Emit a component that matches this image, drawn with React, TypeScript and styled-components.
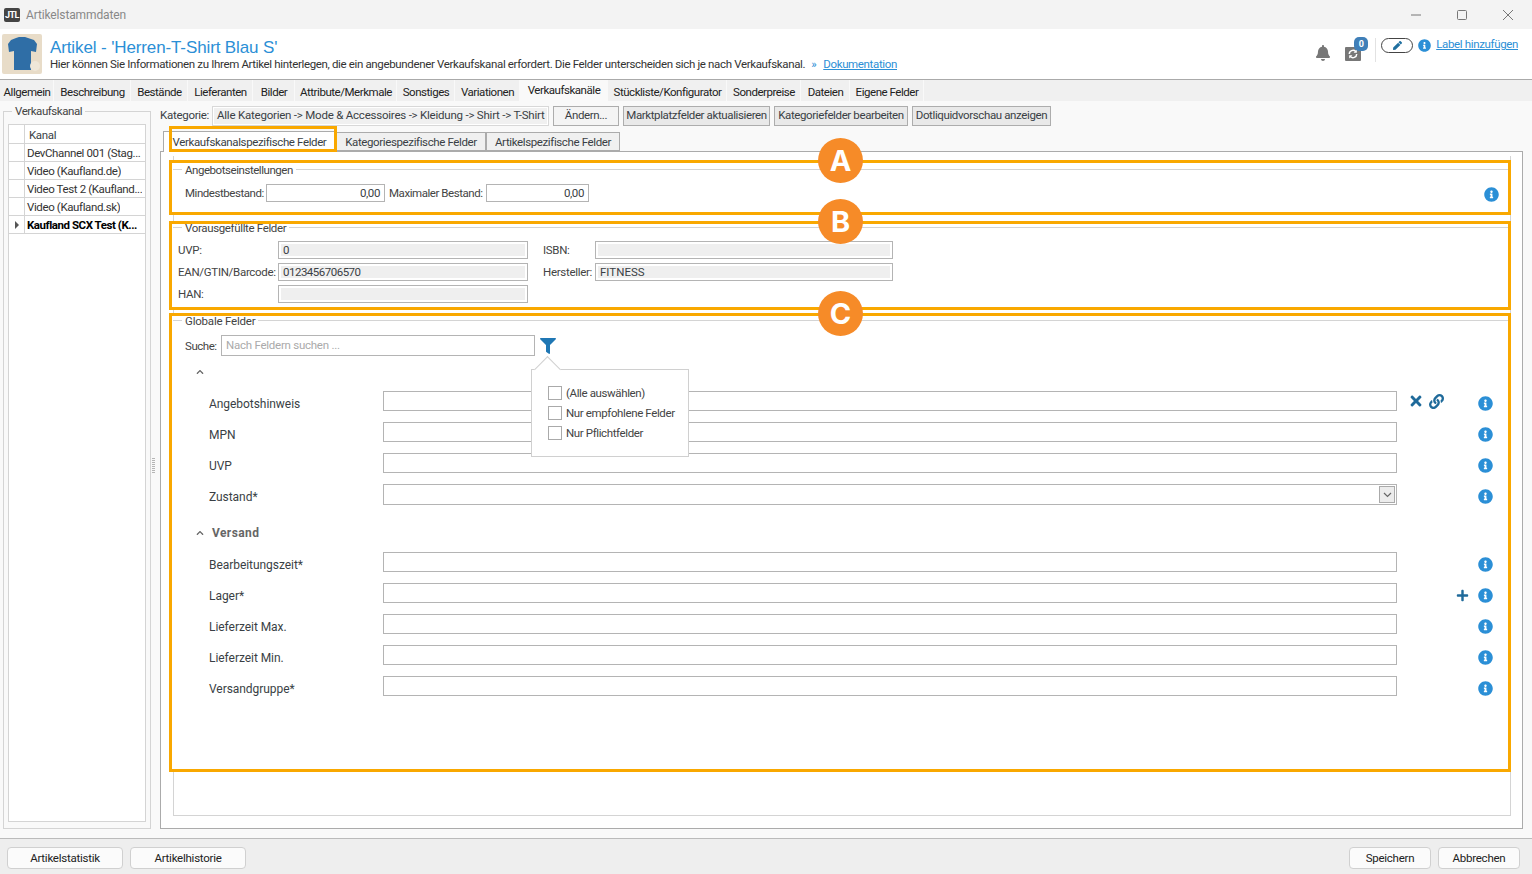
import React from 'react'
import styled, { createGlobalStyle } from 'styled-components'
import { FaBell, FaChevronUp, FaFilter, FaInfoCircle, FaLink, FaPen, FaPlus, FaTimes } from 'react-icons/fa'

const GlobalStyle = createGlobalStyle`
  html, body {
    margin: 0;
    padding: 0;
    background: #f9f9f9;
  }

  * {
    box-sizing: border-box;
  }
`

const mainTabs = [
  { label: 'Allgemein', width: 54 },
  { label: 'Beschreibung', width: 77 },
  { label: 'Bestände', width: 57 },
  { label: 'Lieferanten', width: 65 },
  { label: 'Bilder', width: 42 },
  { label: 'Attribute/Merkmale', width: 102 },
  { label: 'Sonstiges', width: 58 },
  { label: 'Variationen', width: 65 },
  { label: 'Verkaufskanäle', width: 88, active: true },
  { label: 'Stückliste/Konfigurator', width: 119 },
  { label: 'Sonderpreise', width: 74 },
  { label: 'Dateien', width: 49 },
  { label: 'Eigene Felder', width: 74 },
]

const channels = [
  'DevChannel 001 (Stag...',
  'Video (Kaufland.de)',
  'Video Test 2 (Kaufland...',
  'Video (Kaufland.sk)',
]

const groupOne = ['Angebotshinweis', 'MPN', 'UVP']
const groupTwo = ['Bearbeitungszeit*', 'Lager*', 'Lieferzeit Max.', 'Lieferzeit Min.', 'Versandgruppe*']

const Shirt = () => (
  <svg width="40" height="40" viewBox="0 0 40 40">
    <rect width="40" height="40" rx="2" fill="#e8dcc8" />
    <path d="M14 4l3-1h6l3 1 6 2 3 4-1 8-5-1v19H12V17l-5 1-1-8 3-4z" fill="#2f6ea6" />
    <circle cx="33" cy="32" r="5" fill="#efe7d8" />
  </svg>
)

const Sync = () => (
  <svg width="16" height="14" viewBox="0 0 16 14">
    <rect width="16" height="14" rx="1" fill="#777" />
    <path d="M4.300 7a3.700 3.700 0 0 1 6.400-2.500M11.700 7a3.700 3.700 0 0 1-6.400 2.500" fill="none" stroke="#fff" strokeWidth="1.500" />
    <path d="M11.800 2.500v3.200H8.600zM4.200 11.500V8.300h3.200z" fill="#fff" />
  </svg>
)

const App = () => (
  <Page>
    <GlobalStyle />
    <TitleBar>
      <AppLogo>JTL</AppLogo>
      <WindowTitle>Artikelstammdaten</WindowTitle>
      <WindowButtons>
        <svg width="12" height="12" viewBox="0 0 12 12"><path d="M1 6h10" stroke="#777" /></svg>
        <svg width="12" height="12" viewBox="0 0 12 12"><rect x="1.500" y="1.500" width="9" height="9" rx="1" fill="none" stroke="#777" /></svg>
        <svg width="12" height="12" viewBox="0 0 12 12"><path d="M1 1l10 10M11 1L1 11" stroke="#777" /></svg>
      </WindowButtons>
    </TitleBar>

    <Header>
      <Shirt />
      <HeaderText>
        <ArticleTitle>Artikel - 'Herren-T-Shirt Blau S'</ArticleTitle>
        <HeaderHint>
          Hier können Sie Informationen zu Ihrem Artikel hinterlegen, die ein angebundener Verkaufskanal erfordert. Die Felder unterscheiden sich je nach Verkaufskanal.
          <Raquo>»</Raquo>
          <HeaderLink>Dokumentation</HeaderLink>
        </HeaderHint>
      </HeaderText>
      <HeaderTools>
        <BellSlot>
          <FaBell size={16} color="#777" />
        </BellSlot>
        <SyncSlot>
          <Sync />
          <SyncBadge>0</SyncBadge>
        </SyncSlot>
        <ToolDivider />
        <PencilPill>
          <FaPen size={9} color="#1f6f9f" />
        </PencilPill>
        <LabelInfo>
          <FaInfoCircle size={13} color="#2b8fd6" />
        </LabelInfo>
        <HeaderLink>Label hinzufügen</HeaderLink>
      </HeaderTools>
    </Header>

    <MainTabs>
      {mainTabs.map((tab) => (
        <MainTab key={tab.label} $width={tab.width} $active={tab.active}>
          {tab.label}
        </MainTab>
      ))}
    </MainTabs>

    <Body>
      <Sidebar>
        <SideLegend $left={8} $top={-8} $spacing={-0.45}>Verkaufskanal</SideLegend>
        <ChannelGrid>
          <ChannelHeadRow>
            <ChannelMarker />
            <ChannelHead>Kanal</ChannelHead>
          </ChannelHeadRow>
          {channels.map((channel) => (
            <ChannelRow key={channel}>
              <ChannelMarker />
              <ChannelCell>{channel}</ChannelCell>
            </ChannelRow>
          ))}
          <ChannelRow>
            <ChannelMarker>
              <RowArrow />
            </ChannelMarker>
            <ChannelCell $bold>Kaufland SCX Test (K...</ChannelCell>
          </ChannelRow>
        </ChannelGrid>
      </Sidebar>

      <Splitter>
        <SplitterGrip />
      </Splitter>

      <Content>
        <CategoryBar>
          <CategoryLabel>Kategorie:</CategoryLabel>
          <CategoryPath>Alle Kategorien -&gt; Mode &amp; Accessoires -&gt; Kleidung -&gt; Shirt -&gt; T-Shirt</CategoryPath>
          <ToolButton $width={66} $light>Ändern...</ToolButton>
          <ToolButton $width={147}>Marktplatzfelder aktualisieren</ToolButton>
          <ToolButton $width={134}>Kategoriefelder bearbeiten</ToolButton>
          <ToolButton $width={139}>Dotliquidvorschau anzeigen</ToolButton>
        </CategoryBar>

        <SubTabs>
          <SubTab $width={173} $active>
            <TabHighlight />
            Verkaufskanalspezifische Felder
          </SubTab>
          <SubTab $width={150}>Kategoriespezifische Felder</SubTab>
          <SubTab $width={134}>Artikelspezifische Felder</SubTab>
        </SubTabs>

        <TabPanel>
          <InnerPanel>
            <Highlight $height={55} $gap={0}>
              <GroupLegend $left={13} $top={3} $spacing={-0.45}>Angebotseinstellungen</GroupLegend>
              <GroupLine $offset={9} />
              <OfferRow>
                <FieldLabel $width={78}>Mindestbestand:</FieldLabel>
                <NumberField $width={119}>0,00</NumberField>
                <FieldLabel $width={94}>Maximaler Bestand:</FieldLabel>
                <NumberField $width={103}>0,00</NumberField>
                <OfferInfo>
                  <FaInfoCircle size={15} color="#2b8fd6" />
                </OfferInfo>
              </OfferRow>
              <MarkerBadge>A</MarkerBadge>
            </Highlight>

            <Highlight $height={89} $gap={6}>
              <GroupLegend $left={13} $top={0} $spacing={-0.35}>Vorausgefüllte Felder</GroupLegend>
              <GroupLine $offset={6} />
              <PrefillGrid>
                <PrefillLabel>UVP:</PrefillLabel>
                <ReadonlyField>0</ReadonlyField>
                <PrefillLabel>ISBN:</PrefillLabel>
                <ReadonlyField />
                <PrefillLabel>EAN/GTIN/Barcode:</PrefillLabel>
                <ReadonlyField $digits>0123456706570</ReadonlyField>
                <PrefillLabel>Hersteller:</PrefillLabel>
                <ReadonlyField>FITNESS</ReadonlyField>
                <PrefillLabel>HAN:</PrefillLabel>
                <ReadonlyField />
              </PrefillGrid>
              <MarkerBadge>B</MarkerBadge>
            </Highlight>

            <Highlight $height={459} $gap={3}>
              <GroupLegend $left={13} $top={1} $spacing={-0.2}>Globale Felder</GroupLegend>
              <GroupLine $offset={7} />
              <SearchRow>
                <FieldLabel $width={33}>Suche:</FieldLabel>
                <SearchInput>Nach Feldern suchen ...</SearchInput>
                <FaFilter size={16} color="#1f77b4" />
              </SearchRow>
              <SectionHead $top={4}>
                <FaChevronUp size={8} color="#666" />
              </SectionHead>
              {groupOne.map((label, i) => (
                <FieldRow key={label}>
                  <RowLabel>{label}</RowLabel>
                  <RowInput />
                  <RowActions>
                    {i === 0 && (
                      <>
                        <FaTimes size={16} color="#1f6a9a" />
                        <FaLink size={15} color="#1f6a9a" />
                      </>
                    )}
                  </RowActions>
                  <FaInfoCircle size={15} color="#2b8fd6" />
                </FieldRow>
              ))}
              <FieldRow>
                <RowLabel>Zustand*</RowLabel>
                <RowInput $select>
                  <SelectArrow>
                    <svg width="9" height="6" viewBox="0 0 9 6" fill="none" stroke="#666" strokeWidth="1.200">
                      <path d="M1 1l3.500 3.500L8 1" />
                    </svg>
                  </SelectArrow>
                </RowInput>
                <RowActions />
                <FaInfoCircle size={15} color="#2b8fd6" />
              </FieldRow>
              <SectionHead $top={6}>
                <FaChevronUp size={8} color="#666" />
                <SectionTitle>Versand</SectionTitle>
              </SectionHead>
              {groupTwo.map((label, i) => (
                <FieldRow key={label}>
                  <RowLabel>{label}</RowLabel>
                  <RowInput />
                  <RowActions $end>{i === 1 && <FaPlus size={13} color="#1f6a9a" />}</RowActions>
                  <FaInfoCircle size={15} color="#2b8fd6" />
                </FieldRow>
              ))}
              <FilterPopup>
                <FilterOption>
                  <FilterBox />
                  (Alle auswählen)
                </FilterOption>
                <FilterOption>
                  <FilterBox />
                  Nur empfohlene Felder
                </FilterOption>
                <FilterOption>
                  <FilterBox />
                  Nur Pflichtfelder
                </FilterOption>
              </FilterPopup>
              <MarkerBadge>C</MarkerBadge>
            </Highlight>
          </InnerPanel>
        </TabPanel>
      </Content>
    </Body>

    <Footer>
      <FooterGroup>
        <FooterButton $width={116}>Artikelstatistik</FooterButton>
        <FooterButton $width={116}>Artikelhistorie</FooterButton>
      </FooterGroup>
      <FooterGroup>
        <FooterButton $width={82}>Speichern</FooterButton>
        <FooterButton $width={82}>Abbrechen</FooterButton>
      </FooterGroup>
    </Footer>
  </Page>
)

export default App

const Page = styled.div`
  width: 1532px;
  height: 874px;
  overflow: hidden;
  display: flex;
  flex-direction: column;
  font-family: Roboto, 'Liberation Sans', sans-serif;
  font-size: 11.5px;
  letter-spacing: -0.35px;
  color: #3a3f45;
  background: #f9f9f9;
`

const TitleBar = styled.div`
  height: 29px;
  flex: none;
  display: flex;
  align-items: center;
  padding-left: 4px;
  background: #f3f3f3;
`

const AppLogo = styled.div`
  width: 16px;
  height: 14px;
  border-radius: 2px;
  background: #444;
  color: #fff;
  font-size: 9px;
  font-weight: 700;
  line-height: 14px;
  text-align: center;
  letter-spacing: -0.5px;
`

const WindowTitle = styled.div`
  margin-left: 6px;
  color: #888;
  font-size: 12px;
  letter-spacing: -0.13px;
`

const WindowButtons = styled.div`
  margin-left: auto;
  display: flex;
  gap: 34px;
  padding-right: 18px;
`

const Header = styled.div`
  height: 51px;
  flex: none;
  display: flex;
  align-items: flex-start;
  padding: 5px 14px 0 2px;
  background: #fff;
  border-bottom: 1px solid #aaa;
`

const HeaderText = styled.div`
  margin-left: 8px;
`

const ArticleTitle = styled.div`
  color: #2b8fd6;
  font-family: 'Liberation Sans', sans-serif;
  font-size: 17px;
  letter-spacing: -0.12px;
  line-height: 20px;
  margin-top: 4px;
`

const HeaderHint = styled.div`
  color: #333;
  line-height: 15px;
  margin-top: -1px;
`

const Raquo = styled.span`
  margin: 0 7px 0 6px;
  color: #2b8fd6;
`

const HeaderLink = styled.a`
  color: #2b8fd6;
  text-decoration: underline;
  letter-spacing: -0.35px;
`

const HeaderTools = styled.div`
  margin-left: auto;
  margin-top: 4px;
  display: flex;
  align-items: flex-start;
  line-height: 13px;
`

const BellSlot = styled.div`
  display: flex;
  margin-top: 7px;
`

const SyncSlot = styled.div`
  position: relative;
  display: flex;
  margin: 9px 14px 0 14px;
`

const SyncBadge = styled.span`
  position: absolute;
  top: -10px;
  right: -7px;
  width: 14px;
  height: 14px;
  border-radius: 5px;
  background: #3f7fb8;
  color: #fff;
  font-size: 9px;
  font-weight: 700;
  line-height: 14px;
  text-align: center;
`

const ToolDivider = styled.div`
  width: 1px;
  height: 24px;
  background: #e2e2e2;
  margin-right: 5px;
`

const PencilPill = styled.div`
  width: 32px;
  height: 15px;
  border: 1px solid #444;
  border-radius: 8px;
  display: flex;
  align-items: center;
  justify-content: center;
`

const LabelInfo = styled.div`
  display: flex;
  margin: 1px 5px 0 5px;
`

const MainTabs = styled.div`
  height: 21px;
  flex: none;
  display: flex;
  background: #f0f0f0;
`

const MainTab = styled.div<{ $width: number; $active?: boolean }>`
  width: ${(p) => p.$width}px;
  flex: none;
  display: flex;
  align-items: center;
  justify-content: center;
  white-space: nowrap;
  color: #222;
  letter-spacing: -0.46px;
  border-right: 1px solid #f9f9f9;
  background: ${(p) => (p.$active ? '#f9f9f9' : 'transparent')};
  padding-left: 1px;
  padding-top: ${(p) => (p.$active ? '0' : '2px')};
  padding-bottom: ${(p) => (p.$active ? '2px' : '0')};
`

const Body = styled.div`
  flex: 1;
  display: flex;
  min-height: 0;
  padding: 0 9px 9px 3px;
`

const Sidebar = styled.div`
  position: relative;
  width: 148px;
  flex: none;
  margin-top: 10px;
  padding: 12px 4px 6px 4px;
  border: 1px solid #d4d4d4;
`

const GroupLegend = styled.div<{ $left: number; $top: number; $spacing: number }>`
  position: absolute;
  top: ${(p) => p.$top}px;
  left: ${(p) => p.$left}px;
  padding: 0 3px;
  background: #fff;
  line-height: 14px;
  color: #444;
  letter-spacing: ${(p) => p.$spacing}px;
`

const SideLegend = styled(GroupLegend)`
  background: #f9f9f9;
`

const ChannelGrid = styled.div`
  height: 100%;
  background: #fff;
  border: 1px solid #d4d4d4;
`

const ChannelRow = styled.div`
  height: 18px;
  display: flex;
  border-bottom: 1px solid #d4d4d4;
`

const ChannelHeadRow = styled(ChannelRow)`
  height: 19px;
`

const ChannelMarker = styled.div`
  width: 16px;
  flex: none;
  display: flex;
  align-items: center;
  justify-content: center;
  border-right: 1px solid #d4d4d4;
`

const RowArrow = styled.span`
  width: 0;
  height: 0;
  border-top: 4px solid transparent;
  border-bottom: 4px solid transparent;
  border-left: 4px solid #555;
`

const ChannelHead = styled.div`
  padding-left: 4px;
  line-height: 20px;
`

const ChannelCell = styled.div<{ $bold?: boolean }>`
  padding-left: 2px;
  line-height: 18px;
  white-space: nowrap;
  overflow: hidden;
  letter-spacing: ${(p) => (p.$bold ? '-0.45px' : '-0.38px')};
  font-weight: ${(p) => (p.$bold ? 700 : 400)};
  color: ${(p) => (p.$bold ? '#000' : '#333')};
`

const Splitter = styled.div`
  width: 9px;
  flex: none;
  padding-left: 1px;
  display: flex;
  align-items: center;
`

const SplitterGrip = styled.div`
  width: 3px;
  height: 15px;
  background: repeating-linear-gradient(to bottom, #b5b5b5 0 1px, transparent 1px 2px);
`

const Content = styled.div`
  flex: 1;
  min-width: 0;
  display: flex;
  flex-direction: column;
`

const CategoryBar = styled.div`
  height: 20px;
  flex: none;
  margin-top: 5px;
  display: flex;
  gap: 4px;
  align-items: stretch;
`

const CategoryLabel = styled.div`
  width: 48px;
  flex: none;
  line-height: 18px;
  letter-spacing: -0.28px;
  white-space: nowrap;
`

const CategoryPath = styled.div`
  width: 337px;
  flex: none;
  background: #f0f0f0;
  border: 1px solid #d8d8d8;
  outline: 1px solid #fff;
  outline-offset: -2px;
  line-height: 16px;
  padding-left: 4px;
  letter-spacing: -0.22px;
  white-space: nowrap;
  overflow: hidden;
`

const ToolButton = styled.div<{ $width: number; $light?: boolean }>`
  width: ${(p) => p.$width}px;
  flex: none;
  text-align: center;
  line-height: 16px;
  white-space: nowrap;
  border: 1px solid #adadad;
  background: ${(p) => (p.$light ? '#f4f4f4' : '#e9e9e9')};
  letter-spacing: -0.38px;
`

const SubTabs = styled.div`
  height: 19px;
  flex: none;
  margin-top: 6px;
  padding-left: 3px;
  display: flex;
  align-items: flex-end;
`

const SubTab = styled.div<{ $width: number; $active?: boolean }>`
  position: relative;
  width: ${(p) => p.$width}px;
  height: ${(p) => (p.$active ? 21 : 19)}px;
  flex: none;
  text-align: center;
  line-height: ${(p) => (p.$active ? 21 : 18)}px;
  white-space: nowrap;
  letter-spacing: -0.38px;
  background: ${(p) => (p.$active ? '#fff' : '#f0f0f0')};
  border: 1px solid #ababab;
  border-bottom: ${(p) => (p.$active ? 'none' : '1px solid #ababab')};
  margin-bottom: ${(p) => (p.$active ? '-1px' : '0')};
  z-index: ${(p) => (p.$active ? 2 : 0)};
`

const TabHighlight = styled.span`
  position: absolute;
  left: 5px;
  top: -6px;
  width: 168px;
  height: 26px;
  border: 3px solid #f9a800;
`

const TabPanel = styled.div`
  flex: 1;
  min-height: 0;
  padding: 4px 11px 12px 12px;
  background: #fff;
  border: 1px solid #ababab;
`

const InnerPanel = styled.div`
  height: 100%;
  display: flex;
  flex-direction: column;
  border: 1px solid #d4d4d4;
  border-top: none;
  padding-top: 4px;
`

const Highlight = styled.section<{ $height: number; $gap: number }>`
  position: relative;
  height: ${(p) => p.$height}px;
  flex: none;
  margin: ${(p) => p.$gap}px -1px 0 -5px;
  padding-left: 4px;
  background: #fff;

  &::after {
    content: '';
    position: absolute;
    inset: 0;
    border: 3px solid #f9a800;
    pointer-events: none;
  }
`

const GroupLine = styled.div<{ $offset: number }>`
  height: 1px;
  margin-top: ${(p) => p.$offset}px;
  background: #d4d4d4;
`

const MarkerBadge = styled.div`
  position: absolute;
  top: -22px;
  left: 649px;
  width: 45px;
  height: 45px;
  border-radius: 50%;
  background: #f68b28;
  color: #fff;
  font-family: Inter, sans-serif;
  font-size: 29px;
  font-weight: 700;
  letter-spacing: 0;
  line-height: 45px;
  text-align: center;
  z-index: 3;
`

const OfferRow = styled.div`
  height: 18px;
  margin: 14px 0 0 12px;
  display: flex;
  align-items: center;
  gap: 3px;
`

const FieldLabel = styled.div<{ $width: number }>`
  width: ${(p) => p.$width}px;
  flex: none;
  color: #444;
  white-space: nowrap;
  letter-spacing: -0.45px;
`

const NumberField = styled.div<{ $width: number }>`
  width: ${(p) => p.$width}px;
  height: 18px;
  margin-right: 1px;
  line-height: 16px;
  padding-right: 4px;
  text-align: right;
  border: 1px solid #b4b4b4;
  background: #fff;
  letter-spacing: -0.4px;
`

const OfferInfo = styled.div`
  margin-left: auto;
  margin-right: 12px;
  margin-top: 2px;
  display: flex;
`

const PrefillGrid = styled.div`
  display: grid;
  grid-template-columns: 100px 250px 67px 298px;
  grid-auto-rows: 18px;
  row-gap: 4px;
  margin: 13px 0 0 5px;
`

const PrefillLabel = styled.div`
  color: #444;
  line-height: 18px;
  white-space: nowrap;
  letter-spacing: -0.3px;

  &:nth-child(4n + 3) {
    padding-left: 15px;
  }
`

const ReadonlyField = styled.div<{ $digits?: boolean }>`
  border: 1px solid #b4b4b4;
  background: #efefef;
  outline: 2px solid #fff;
  outline-offset: -3px;
  line-height: 16px;
  padding-left: 4px;
  letter-spacing: ${(p) => (p.$digits ? '-0.5px' : '0')};
`

const SearchRow = styled.div`
  height: 21px;
  margin: 14px 0 0 12px;
  display: flex;
  align-items: center;
  gap: 3px;
`

const SearchInput = styled.div`
  width: 314px;
  height: 21px;
  margin-right: 2px;
  padding-left: 4px;
  line-height: 19px;
  color: #aaa;
  border: 1px solid #b4b4b4;
  letter-spacing: -0.25px;
`

const SectionHead = styled.div<{ $top: number }>`
  height: 24px;
  margin: ${(p) => p.$top}px 0 7px;
  padding-left: 23px;
  display: flex;
  align-items: center;
  gap: 8px;
`

const SectionTitle = styled.div`
  font-size: 12px;
  font-weight: 700;
  letter-spacing: 0.4px;
  color: #666;
`

const FieldRow = styled.div`
  height: 31px;
  display: grid;
  grid-template-columns: 174px 1014px 81px 15px;
  padding-left: 36px;
  align-items: start;

  & > svg {
    margin-top: 5px;
  }
`

const RowLabel = styled.div`
  font-size: 12px;
  letter-spacing: -0.05px;
  color: #3a3f45;
  line-height: 27px;
`

const RowInput = styled.div<{ $select?: boolean }>`
  height: ${(p) => (p.$select ? 21 : 20)}px;
  border: 1px solid #b4b4b4;
  background: #fff;
  display: flex;
  justify-content: flex-end;
`

const RowActions = styled.div<{ $end?: boolean }>`
  display: flex;
  align-items: center;
  gap: 5px;
  height: 20px;
  padding-left: 11px;
  justify-content: ${(p) => (p.$end ? 'flex-end' : 'flex-start')};
  padding-right: ${(p) => (p.$end ? '9px' : '0')};
  padding-top: ${(p) => (p.$end ? '5px' : '0')};
`

const SelectArrow = styled.div`
  width: 16px;
  height: 17px;
  margin: 1px;
  background: #ececec;
  border: 1px solid #aaa;
  display: flex;
  align-items: center;
  justify-content: center;
`

const FilterPopup = styled.div`
  position: absolute;
  top: 56px;
  left: 362px;
  width: 158px;
  height: 88px;
  padding: 13px 0 0 16px;
  background: #fff;
  border: 1px solid #d0d0d0;
  z-index: 2;

  &::before {
    content: '';
    position: absolute;
    top: -10px;
    left: 6px;
    width: 18px;
    height: 18px;
    background: #fff;
    border-top: 1px solid #d0d0d0;
    border-left: 1px solid #d0d0d0;
    transform: rotate(45deg);
  }
`

const FilterOption = styled.div`
  position: relative;
  height: 20px;
  display: flex;
  align-items: center;
  gap: 4px;
  color: #444;
  letter-spacing: -0.38px;
`

const FilterBox = styled.span`
  width: 14px;
  height: 14px;
  border: 1px solid #aaa;
  background: #fff;
`

const Footer = styled.div`
  height: 36px;
  flex: none;
  display: flex;
  justify-content: space-between;
  padding: 8px 12px 0 7px;
  background: #eee;
  border-top: 1px solid #bbb;
`

const FooterGroup = styled.div`
  display: flex;
  gap: 7px;
`

const FooterButton = styled.div<{ $width: number }>`
  width: ${(p) => p.$width}px;
  height: 22px;
  text-align: center;
  line-height: 20px;
  color: #222;
  background: #fbfbfb;
  border: 1px solid #d0d0d0;
  border-radius: 4px;
  letter-spacing: -0.25px;
`
